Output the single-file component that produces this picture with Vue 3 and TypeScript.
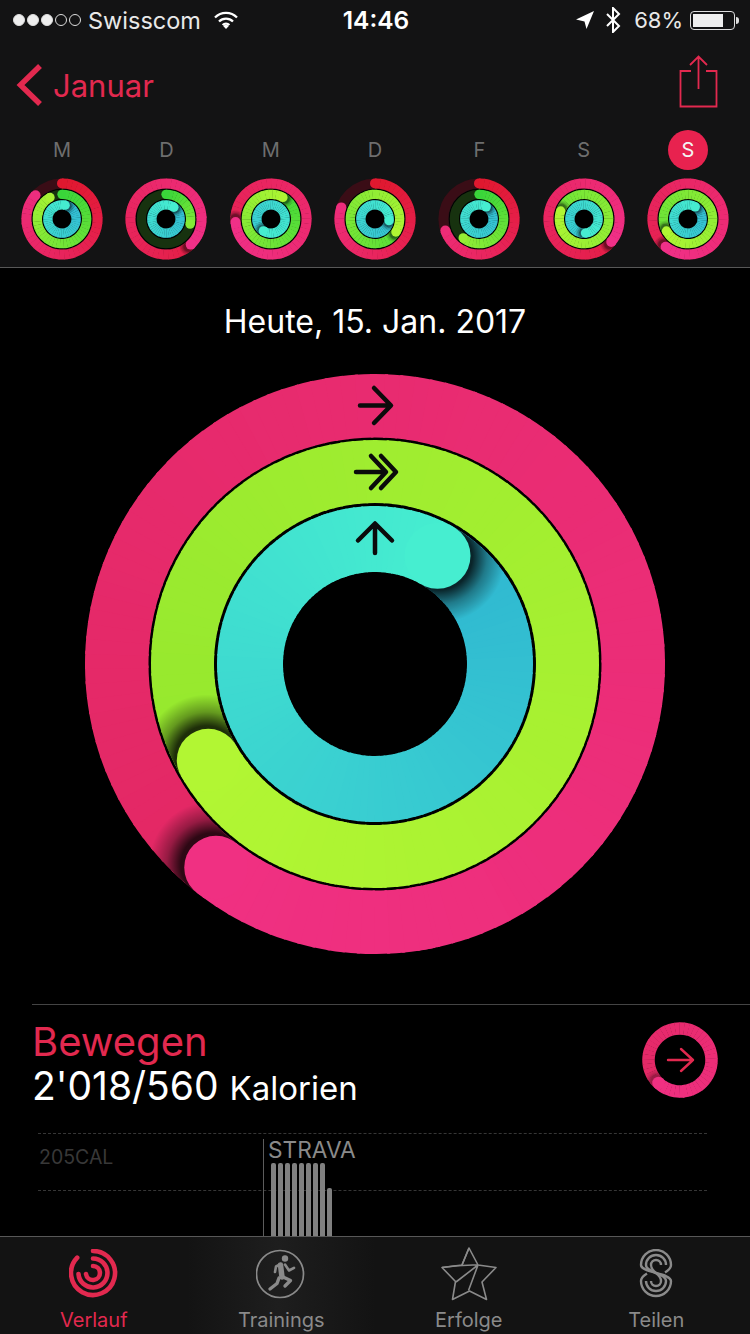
<script setup lang="ts">
import { h } from 'vue';

type Ring = { r: number; w: number; end: number; from: string; to: string; track?: string; shade?: number };

function mix(a: string, b: string, t: number) {
  const out = [1, 3, 5].map((i) => {
    const x = parseInt(a.slice(i, i + 2), 16);
    const y = parseInt(b.slice(i, i + 2), 16);
    return Math.round(x + (y - x) * t).toString(16).padStart(2, '0');
  });
  return `#${out.join('')}`;
}

function point(r: number, deg: number) {
  const rad = (deg * Math.PI) / 180;
  return [r * Math.sin(rad), -r * Math.cos(rad)];
}

function arc(r: number, a: number, b: number) {
  const [x1, y1] = point(r, a);
  const [x2, y2] = point(r, b);
  return `M${x1.toFixed(2)} ${y1.toFixed(2)}A${r} ${r} 0 0 1 ${x2.toFixed(2)} ${y2.toFixed(2)}`;
}

// one dial is drawn as short coloured arcs so the colour can run along the ring
function drawRing(ring: Ring, key: string, step: number) {
  const { r, w, end, from, to, track, shade = 1 } = ring;
  const start = Math.max(0, end - 360);
  const tailFrom = Math.max(start, end - 50);
  const nodes: any[] = [];
  const color = (a: number) => mix(from, to, (a - start) / (end - start));
  const seg = (a: number, b: number) =>
    h('path', { d: arc(r, a, Math.min(b + 0.6, end)), fill: 'none', stroke: color(a), 'stroke-width': w });

  if (track) nodes.push(h('circle', { r, fill: 'none', stroke: track, 'stroke-width': w }));
  if (end <= 360) nodes.push(h('circle', { cx: 0, cy: -r, r: w / 2, fill: from }));
  for (let a = start; a < tailFrom; a += step) nodes.push(seg(a, a + step));

  if (end > 360) {
    // shadow the end of the ring drops on the start of the same ring
    const [sx, sy] = point(r, end + (w > 20 ? 1 : 4));
    const o = r + w / 2;
    const i = r - w / 2;
    nodes.push(
      h('clipPath', { id: `clip-${key}` }, [
        h('path', {
          'clip-rule': 'evenodd',
          d: `M${-o} 0A${o} ${o} 0 1 1 ${o} 0A${o} ${o} 0 1 1 ${-o} 0ZM${-i} 0A${i} ${i} 0 1 1 ${i} 0A${i} ${i} 0 1 1 ${-i} 0Z`,
        }),
      ]),
      h('circle', { cx: sx, cy: sy, r: w, opacity: shade, fill: 'url(#cap-shadow)', 'clip-path': `url(#clip-${key})` }),
    );
  }
  for (let a = tailFrom; a < end; a += step) nodes.push(seg(a, a + step));
  const [cx, cy] = point(r, end);
  nodes.push(h('circle', { cx, cy, r: w / 2, fill: to }));
  return nodes;
}

let dialCount = 0;
const RingDial = (props: { size: number; box: number; rings: Ring[]; backdrop?: number }) => {
  const id = dialCount++;
  const b = props.box;
  return h('svg', { width: props.size, height: props.size, viewBox: `${-b} ${-b} ${b * 2} ${b * 2}`, style: 'display:block' }, [
    h('defs', [
      h('radialGradient', { id: 'cap-shadow' }, [
        h('stop', { offset: '50%', 'stop-color': '#000', 'stop-opacity': 0.8 }),
        h('stop', { offset: '72%', 'stop-color': '#000', 'stop-opacity': 0.34 }),
        h('stop', { offset: '100%', 'stop-color': '#000', 'stop-opacity': 0 }),
      ]),
    ]),
    props.backdrop ? h('circle', { r: props.backdrop, fill: '#000' }) : null,
    ...props.rings.flatMap((ring, i) => drawRing(ring, `${id}-${i}`, props.size > 200 ? 3 : 8)),
  ]);
};
RingDial.props = ['size', 'box', 'rings', 'backdrop'];

function smallRings(move: number, exercise: number, stand: number): Ring[] {
  const build = (r: number, w: number, end: number, c: string[], track: string): Ring => {
    const start = Math.max(0, end - 360) / end;
    return { r, w, end, from: mix(c[0], c[1], start), to: mix(c[0], c[1], Math.min(1, 0.5 + end / 800)), track, shade: 0.65 };
  };
  return [
    build(35.6, 10, move, ['#e0182f', '#f03088'], '#3a0d16'),
    build(24.65, 9.3, exercise, ['#3ad63a', '#b0f533'], '#17320f'),
    build(14.15, 9.3, stand, ['#2fb4d2', '#46eed0'], '#0f3a3e'),
  ];
}

const days = [
  { label: 'M', rings: smallRings(312, 331, 373) },
  { label: 'D', rings: smallRings(496, 102, 394) },
  { label: 'M', rings: smallRings(625, 389, 573) },
  { label: 'D', rings: smallRings(289, 482, 457) },
  { label: 'F', rings: smallRings(251, 220, 391) },
  { label: 'S', rings: smallRings(490, 649, 534) },
  { label: 'S', today: true, rings: smallRings(579, 601, 391) },
];

const bigRings: Ring[] = [
  { r: 258.25, w: 63.5, end: 578, from: '#e32864', to: '#f03082' },
  { r: 192.5, w: 63, end: 600, from: '#96e82e', to: '#b2f633' },
  { r: 125, w: 66, end: 390, from: '#2fb6d1', to: '#46eed0' },
];
const moveRing: Ring[] = [{ r: 31.5, w: 12.5, end: 583, from: '#e32864', to: '#f03082', shade: 0.4 }];

const bars = [73, 73, 73, 73, 73, 73, 73, 73, 48];
const tabs = ['Verlauf', 'Trainings', 'Erfolge', 'Teilen'];

// the three parallel lines of the share icon
const sLines = [15, 10, 5].map((r) => {
  const top = 16;
  const low = 32;
  return `M${17 + r} ${top}A${r} ${r} 0 1 0 ${17 - r} ${top}C${17 - r} ${top + 8} ${17 + r} ${low - 8} ${17 + r} ${low}A${r} ${r} 0 1 1 ${17 - r} ${low}`;
});
</script>

<template>
  <div class="screen">
    <header class="top">
      <div class="status">
        <div class="status-left">
          <span class="signal">
            <i class="on"></i><i class="on"></i><i class="on"></i><i></i><i></i>
          </span>
          <span>Swisscom</span>
          <svg class="wifi" width="24" height="18" viewBox="0 0 24 18">
            <path d="M1 6.5a15.5 15.5 0 0 1 22 0M5 10.5a10 10 0 0 1 14 0M8.6 14a5 5 0 0 1 6.8 0" fill="none" stroke="#fff" stroke-width="2.3" />
            <path d="M12 18l-2.8-3a4 4 0 0 1 5.6 0z" fill="#fff" />
          </svg>
        </div>
        <div class="clock">14:46</div>
        <div class="status-right">
          <svg width="18" height="18" viewBox="0 0 18 18"><path d="M0 8.5L18 0l-7.5 18-2-7.5z" fill="#fff" /></svg>
          <svg class="bluetooth" width="16" height="26" viewBox="0 0 16 26">
            <path d="M2 7l12 12-6 6V1l6 6L2 19" fill="none" stroke="#fff" stroke-width="2" />
          </svg>
          <span class="percent">68%</span>
          <div class="battery"><div class="battery-fill"></div></div>
          <div class="battery-tip"></div>
        </div>
      </div>

      <div class="nav">
        <div class="back">
          <svg width="26" height="44" viewBox="0 0 26 44">
            <path d="M24 3L4.500 22 24 41" fill="none" stroke="#e2294f" stroke-width="5.500" />
          </svg>
          <span>Januar</span>
        </div>
        <svg class="share" width="40" height="54" viewBox="0 0 40 54">
          <path d="M12 16H1.500v35.500h36V16H27" fill="none" stroke="#e2294f" stroke-width="1.800" />
          <path d="M19.500 34V1.500M11 10l8.500-8.500L28 10" fill="none" stroke="#e2294f" stroke-width="1.800" />
        </svg>
      </div>

      <div class="week">
        <div v-for="(day, i) in days" :key="i" class="day">
          <div class="letter" :class="{ today: day.today }">{{ day.label }}</div>
          <RingDial :size="82" :box="41" :rings="day.rings" :backdrop="30.3" />
        </div>
      </div>
    </header>

    <main class="content">
      <div class="date">Heute, 15. Jan. 2017</div>

      <div class="hero">
        <RingDial :size="580" :box="290" :rings="bigRings" />
        <svg class="hero-arrows" width="580" height="580" viewBox="85 374 580 580">
          <g fill="none" stroke="#0b0b0b" stroke-width="4.500" stroke-linecap="round" stroke-linejoin="round">
            <path d="M360 405.500h30M374 388l17 17.500-17 17.500" />
            <path d="M356 472h28M371 456l15 16-15 16M381 456l15 16-15 16" />
            <path d="M375 524v29M358 540.500l17-17 17 17" />
          </g>
        </svg>
      </div>

      <section class="detail">
        <div class="detail-head">
          <div>
            <div class="detail-title">Bewegen</div>
            <div class="detail-value">2'018/560 <span>Kalorien</span></div>
          </div>
          <div class="move-icon">
            <RingDial :size="76" :box="38" :rings="moveRing" />
            <svg class="move-arrow" width="76" height="76" viewBox="0 0 76 76">
              <path d="M26 38h25M39 27l12 11-12 11" fill="none" stroke="#e2294f" stroke-width="2.400" stroke-linecap="round" stroke-linejoin="round" />
            </svg>
          </div>
        </div>

        <div class="chart">
          <div class="grid-line first"></div>
          <div class="grid-line second"></div>
          <div class="cal">205CAL</div>
          <div class="workout">
            <div class="workout-name">STRAVA</div>
            <div class="bars">
              <div v-for="(b, i) in bars" :key="i" class="bar" :style="{ height: b + 'px' }"></div>
            </div>
          </div>
        </div>
      </section>
    </main>

    <nav class="tabs">
      <div v-for="(tab, i) in tabs" :key="tab" class="tab" :class="{ active: i === 0 }">
        <div class="tab-icon">
          <svg v-if="i === 0" width="50" height="50" viewBox="-24 -24 50 50" fill="none" stroke="#e2294f" stroke-width="4.600" stroke-linecap="round">
            <path d="M0 -22A22 22 0 1 1 -15.800 -15.300" />
            <path d="M-14.500 1A14.500 14.500 0 1 0 0 -14.500" />
            <path d="M-7 1A7 7 0 1 0 0 -7" />
          </svg>
          <svg v-else-if="i === 1" width="50" height="50" viewBox="1 0 50 50" fill="none" stroke="#8a8a8a" stroke-linejoin="round" stroke-linecap="round">
            <circle cx="25" cy="25" r="23.500" stroke-width="1.700" />
            <circle cx="30" cy="9.500" r="3.200" fill="#8a8a8a" stroke="none" />
            <path d="M25.500 16l1.500 12" stroke-width="5.500" />
            <path d="M30 15.500l4 6 5-2.700M25 15.500l-4 2-1 5.500" stroke-width="2.600" />
            <path d="M27 27.500l8.500 4-5.500 5.500" stroke-width="3.400" />
            <path d="M24 29l-2 5.500-7 5.500" stroke-width="3.400" />
          </svg>
          <svg v-else-if="i === 2" width="56" height="54" viewBox="0 0 56 54" fill="none" stroke="#8a8a8a" stroke-width="1.600" stroke-linejoin="round">
            <path d="M28 1l9 17 18 2.500-14 14.500 4.500 17.500-17-8.500-17 8.500 3-18L1 20.500 21 18z" />
            <path d="M1 20.500q18-3 36-2.500M37 18L15 35M37 18l-9.500 25.500M21 18l7-17" />
          </svg>
          <svg v-else width="34" height="50" viewBox="0 0 34 50" fill="none" stroke="#8a8a8a" stroke-width="2.400">
            <path v-for="d in sLines" :key="d" :d="d" />
            <path d="M32 16c0 3-2 5-6 7.500M2 32c0-3 2-5 6-7.500" />
          </svg>
        </div>
        <span>{{ tab }}</span>
      </div>
    </nav>
  </div>
</template>

<style>
html,
body {
  margin: 0;
  background: #000;
}
</style>

<style scoped>
.screen {
  width: 750px;
  height: 1334px;
  display: flex;
  flex-direction: column;
  overflow: hidden;
  background: #000;
  color: #fff;
  font-family: Inter, "Liberation Sans", sans-serif;
}

.top {
  height: 267px;
  flex: none;
  background: #131314;
  border-bottom: 1px solid #585858;
}

.status {
  height: 40px;
  display: flex;
  align-items: center;
  justify-content: space-between;
  padding: 0 11px 0 13px;
  font-size: 23.5px;
}
.status-left,
.status-right {
  width: 290px;
  display: flex;
  align-items: center;
  color: #e8e8e8;
}
.status-right {
  justify-content: flex-end;
}
.signal {
  display: flex;
  gap: 2px;
  margin-right: 7px;
}
.signal i {
  width: 12px;
  height: 12px;
  box-sizing: border-box;
  border-radius: 50%;
  border: 1px solid #ddd;
}
.signal i.on {
  background: #eee;
}
.wifi {
  margin-left: 13px;
}
.clock {
  font-weight: 600;
  font-size: 24.5px;
}
.bluetooth {
  margin-left: 11px;
}
.percent {
  margin-left: 13px;
  font-size: 22px;
}
.battery {
  width: 45px;
  height: 19px;
  margin-left: 7px;
  padding: 2px;
  box-sizing: border-box;
  border: 1px solid #ddd;
  border-radius: 4px;
}
.battery-fill {
  width: 30px;
  height: 100%;
  background: #eee;
}
.battery-tip {
  width: 3px;
  height: 7px;
  margin-left: 1px;
  background: #ddd;
  border-radius: 0 3px 3px 0;
}

.nav {
  height: 90px;
  display: flex;
  align-items: center;
  justify-content: space-between;
  padding: 0 31px 0 16px;
}
.back {
  display: flex;
  align-items: center;
  gap: 11px;
  color: #e2294f;
  font-size: 31px;
}
.share {
  margin-top: -7px;
}

.week {
  display: grid;
  grid-template-columns: repeat(7, 1fr);
  padding: 0 10px;
}
.day {
  display: flex;
  flex-direction: column;
  align-items: center;
  gap: 8px;
}
.letter {
  width: 40px;
  height: 40px;
  display: flex;
  align-items: center;
  justify-content: center;
  border-radius: 50%;
  font-size: 20px;
  color: #6e6e6e;
}
.letter.today {
  background: #e8224f;
  color: #f4f4f4;
}

.content {
  flex: 1;
  min-height: 0;
  display: flex;
  flex-direction: column;
  align-items: center;
}
.date {
  height: 52px;
  margin-top: 28px;
  font-size: 32px;
  line-height: 52px;
  color: #fff;
}
.hero {
  position: relative;
  width: 580px;
  height: 580px;
  margin-top: 26px;
}
.hero-arrows {
  position: absolute;
  left: 0;
  top: 0;
}

.detail {
  flex: 1;
  align-self: stretch;
  display: flex;
  flex-direction: column;
  margin: 50px 0 0 32px;
  border-top: 1px solid #444;
}
.detail-head {
  display: flex;
  justify-content: space-between;
  align-items: flex-start;
  padding: 17px 32px 0 0;
  height: 94px;
}
.detail-title {
  color: #e2294f;
  font-size: 40px;
  line-height: 40px;
}
.detail-value {
  font-size: 39px;
  line-height: 48px;
}
.detail-value span {
  font-size: 33px;
}
.move-icon {
  position: relative;
  width: 76px;
  height: 76px;
}
.move-arrow {
  position: absolute;
  left: 0;
  top: 0;
}

.chart {
  position: relative;
  flex: 1;
}
.grid-line {
  position: absolute;
  left: 6px;
  width: 669px;
  border-top: 1px dashed #363636;
}
.grid-line.first {
  top: 17px;
}
.grid-line.second {
  top: 74px;
}
.cal {
  position: absolute;
  left: 7px;
  top: 29px;
  font-size: 19.5px;
  color: #383838;
}
.workout {
  position: absolute;
  left: 231px;
  top: 23px;
  bottom: 0;
  padding-left: 4px;
  border-left: 1px solid #5c5c5c;
}
.workout-name {
  color: #8a8a8a;
  font-size: 22.7px;
  line-height: 22px;
}
.bars {
  position: absolute;
  left: 7px;
  bottom: 0;
  display: flex;
  align-items: flex-end;
  gap: 2.200px;
}
.bar {
  width: 4.800px;
  background: #808080;
  border-radius: 2px 2px 0 0;
}

.tabs {
  height: 97px;
  flex: none;
  display: grid;
  grid-template-columns: repeat(4, 1fr);
  border-top: 1px solid #585858;
  background: linear-gradient(90deg, #131313 25%, #1e1e1e 37%, #131313 50%);
}
.tab {
  display: flex;
  flex-direction: column;
  align-items: center;
  padding-top: 10px;
  color: #8a8a8a;
  font-size: 20px;
}
.tab-icon {
  height: 54px;
  display: flex;
  align-items: center;
  justify-content: center;
}
.tab span {
  line-height: 26px;
  margin-top: 6px;
}
.tab.active {
  color: #e2294f;
}
</style>
